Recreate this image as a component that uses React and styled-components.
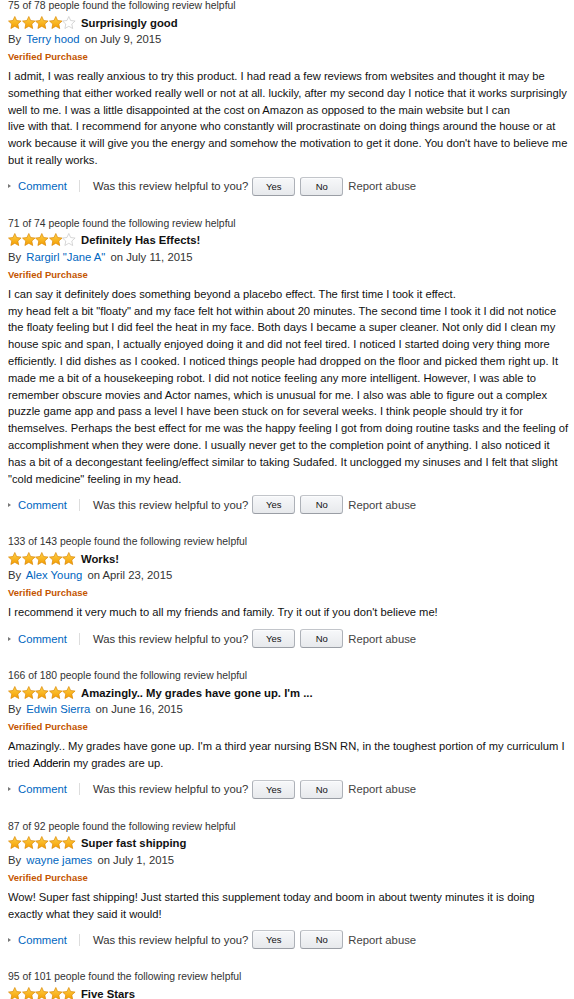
import React from "react";
import styled, { createGlobalStyle } from "styled-components";

const GlobalStyle = createGlobalStyle`
  html, body {
    margin: 0;
    padding: 0;
    background: #ffffff;
    overflow-x: hidden;
  }
  body {
    font-family: "Liberation Sans", Arial, sans-serif;
    color: #111;
  }
`;

const Page = styled.div`
  padding: 0 0 0 8px;
  display: flex;
  flex-direction: column;
`;

const ReviewBlock = styled.section`
  display: flex;
  flex-direction: column;
  padding-bottom: 22px;
`;

const Helpful = styled.div`
  font-size: 10.4px;
  line-height: 12px;
  color: #333;
  white-space: nowrap;
`;

const TitleRow = styled.div`
  display: flex;
  align-items: center;
  gap: 5px;
  height: 17px;
  margin-top: 2px;
`;

const StarRow = styled.div`
  display: flex;
  align-items: center;
`;

const StarSvg = styled.svg`
  width: 13.6px;
  height: 13.6px;
  display: block;
`;

const Title = styled.span`
  font-size: 11.3px;
  font-weight: bold;
  color: #111;
  white-space: nowrap;
`;

const Byline = styled.div`
  font-size: 11.3px;
  line-height: 17px;
  color: #333;
  white-space: nowrap;
`;

const NameLink = styled.a`
  color: #0066c0;
  text-decoration: none;
  margin: 0 2px;
`;

const Verified = styled.div`
  font-size: 9.5px;
  font-weight: bold;
  line-height: 17px;
  color: #c45500;
`;

const Body = styled.div`
  margin-top: 3px;
  font-size: 11.2px;
  line-height: 16.8px;
  color: #111;
  white-space: nowrap;
  overflow: hidden;
`;

const Strong = styled.span`
  color: #000;
  letter-spacing: -0.2px;
`;

const ActionRow = styled.div`
  display: flex;
  align-items: center;
  height: 19px;
  margin-top: 8px;
  font-size: 11.3px;
  white-space: nowrap;
`;

const Caret = styled.span`
  width: 0;
  height: 0;
  border-left: 3px solid #777;
  border-top: 2.5px solid transparent;
  border-bottom: 2.5px solid transparent;
  margin-right: 7px;
`;

const CommentLink = styled.a`
  color: #0066c0;
  text-decoration: none;
`;

const Divider = styled.span`
  width: 1px;
  height: 12px;
  background: #ddd;
  margin: 0 13px 0 12px;
`;

const Question = styled.span`
  color: #333;
`;

const VoteButton = styled.button`
  width: 43px;
  height: 19px;
  margin-left: ${(p) => p.$gap}px;
  padding: 0;
  border: 1px solid #adb1b8;
  border-top-color: #c2c5ca;
  border-bottom-color: #9a9ea5;
  border-radius: 3px;
  background: linear-gradient(#f7f8fa, #e7e9ec);
  font-family: "Liberation Sans", Arial, sans-serif;
  font-size: 9.5px;
  color: #111;
  box-shadow: inset 0 1px 0 rgba(255, 255, 255, 0.6);
`;

const Report = styled.span`
  margin-left: 5px;
  color: #444;
`;

function Star({ filled, id }) {
  return (
    <StarSvg viewBox="0 0 24 24">
      <defs>
        <linearGradient id={id} x1="0" y1="0" x2="0" y2="1">
          <stop offset="0" stopColor="#ffd24a" />
          <stop offset="1" stopColor="#f39c00" />
        </linearGradient>
      </defs>
      <polygon
        points="12,0.9 15.3,8 23.1,8.9 17.3,14.2 18.9,22.1 12,18.1 5.1,22.1 6.7,14.2 0.9,8.9 8.7,8"
        fill={filled ? `url(#${id})` : "#ffffff"}
        stroke={filled ? "#d88400" : "#c4c4c4"}
        strokeWidth="1.2"
        strokeLinejoin="round"
      />
    </StarSvg>
  );
}

function Stars({ rating, rid }) {
  return (
    <StarRow>
      {[0, 1, 2, 3, 4].map((i) => (
        <Star key={i} filled={i < rating} id={`g-${rid}-${i}`} />
      ))}
    </StarRow>
  );
}

const reviews = [
  {
    helpful: "75 of 78 people found the following review helpful",
    rating: 4,
    title: "Surprisingly good",
    name: "Terry hood",
    date: "July 9, 2015",
    lines: [
      "I admit, I was really anxious to try this product. I had read a few reviews from websites and thought it may be",
      "something that either worked really well or not at all. luckily, after my second day I notice that it works surprisingly",
      "well to me. I was a little disappointed at the cost on Amazon as opposed to the main website but I can",
      "live with that. I recommend for anyone who constantly will procrastinate on doing things around the house or at",
      "work because it will give you the energy and somehow the motivation to get it done. You don't have to believe me",
      "but it really works.",
    ],
  },
  {
    helpful: "71 of 74 people found the following review helpful",
    rating: 4,
    title: "Definitely Has Effects!",
    name: "Rargirl \"Jane A\"",
    date: "July 11, 2015",
    lines: [
      "I can say it definitely does something beyond a placebo effect. The first time I took it effect.",
      "my head felt a bit \"floaty\" and my face felt hot within about 20 minutes. The second time I took it I did not notice",
      "the floaty feeling but I did feel the heat in my face. Both days I became a super cleaner. Not only did I clean my",
      "house spic and span, I actually enjoyed doing it and did not feel tired. I noticed I started doing very thing more",
      "efficiently. I did dishes as I cooked. I noticed things people had dropped on the floor and picked them right up. It",
      "made me a bit of a housekeeping robot. I did not notice feeling any more intelligent. However, I was able to",
      "remember obscure movies and Actor names, which is unusual for me. I also was able to figure out a complex",
      "puzzle game app and pass a level I have been stuck on for several weeks. I think people should try it for",
      "themselves. Perhaps the best effect for me was the happy feeling I got from doing routine tasks and the feeling of",
      "accomplishment when they were done. I usually never get to the completion point of anything. I also noticed it",
      "has a bit of a decongestant feeling/effect similar to taking Sudafed. It unclogged my sinuses and I felt that slight",
      "\"cold medicine\" feeling in my head.",
    ],
  },
  {
    helpful: "133 of 143 people found the following review helpful",
    rating: 5,
    title: "Works!",
    name: "Alex Young",
    date: "April 23, 2015",
    lines: [
      "I recommend it very much to all my friends and family. Try it out if you don't believe me!",
    ],
  },
  {
    helpful: "166 of 180 people found the following review helpful",
    rating: 5,
    title: "Amazingly.. My grades have gone up. I'm ...",
    name: "Edwin Sierra",
    date: "June 16, 2015",
    lines: [
      "Amazingly.. My grades have gone up. I'm a third year nursing BSN RN, in the toughest portion of my curriculum I",
      <>
        tried <Strong>Adderin</Strong> my grades are up.
      </>,
    ],
  },
  {
    helpful: "87 of 92 people found the following review helpful",
    rating: 5,
    title: "Super fast shipping",
    name: "wayne james",
    date: "July 1, 2015",
    lines: [
      "Wow! Super fast shipping! Just started this supplement today and boom in about twenty minutes it is doing",
      "exactly what they said it would!",
    ],
  },
];

function Review({ r, idx }) {
  return (
    <ReviewBlock>
      <Helpful>{r.helpful}</Helpful>
      <TitleRow>
        <Stars rating={r.rating} rid={idx} />
        <Title>{r.title}</Title>
      </TitleRow>
      <Byline>
        By<NameLink href="#"> {r.name}</NameLink> on {r.date}
      </Byline>
      <Verified>Verified Purchase</Verified>
      <Body>
        {r.lines.map((l, i) => (
          <React.Fragment key={i}>
            {l}
            {i < r.lines.length - 1 && <br />}
          </React.Fragment>
        ))}
      </Body>
      <ActionRow>
        <Caret />
        <CommentLink href="#">Comment</CommentLink>
        <Divider />
        <Question>Was this review helpful to you?</Question>
        <VoteButton $gap={4}>Yes</VoteButton>
        <VoteButton $gap={5}>No</VoteButton>
        <Report>Report abuse</Report>
      </ActionRow>
    </ReviewBlock>
  );
}

export default function App() {
  return (
    <>
      <GlobalStyle />
      <Page>
        {reviews.map((r, i) => (
          <Review key={i} r={r} idx={i} />
        ))}
        <ReviewBlock>
          <Helpful>95 of 101 people found the following review helpful</Helpful>
          <TitleRow>
            <Stars rating={5} rid={9} />
            <Title>Five Stars</Title>
          </TitleRow>
        </ReviewBlock>
      </Page>
    </>
  );
}
